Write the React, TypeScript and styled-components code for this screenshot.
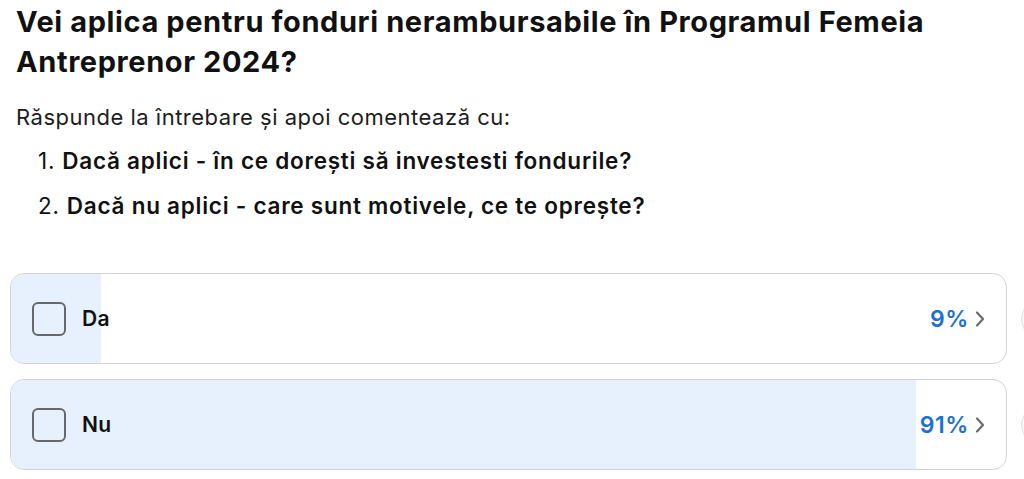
import React from "react";
import styled, { createGlobalStyle } from "styled-components";

const GlobalStyle = createGlobalStyle`
  html, body {
    margin: 0;
    padding: 0;
    background: #ffffff;
    overflow: hidden;
  }
  body {
    font-family: Inter, "Noto Sans", "Liberation Sans", sans-serif;
    color: #1c1c1e;
  }
`;

const Page = styled.div`
  width: 1024px;
  height: 479px;
  overflow: hidden;
  padding-top: 2px;
  box-sizing: border-box;
`;

const Title = styled.h1`
  margin: 0 16px;
  font-size: 29px;
  line-height: 40px;
  font-weight: 700;
  color: #111111;
  letter-spacing: 0.6px;
`;

const Intro = styled.p`
  margin: 21px 16px 0;
  font-size: 22px;
  line-height: 28px;
  letter-spacing: 0.5px;
  color: #1c1c1e;
`;

const Steps = styled.ol`
  margin: 16px 0 0;
  padding: 0 0 0 38px;
  list-style: none;
  display: flex;
  flex-direction: column;
  gap: 17px;
`;

const Step = styled.li`
  font-size: 22.5px;
  line-height: 28px;
  letter-spacing: 0.75px;
  color: #111111;
  span {
    font-weight: 400;
  }
  b {
    font-weight: 600;
  }
`;

const Poll = styled.div`
  margin-top: 53px;
  display: flex;
  flex-direction: column;
  gap: 15px;
`;

const Row = styled.div`
  display: flex;
  align-items: center;
  gap: 14px;
  padding-left: 10px;
`;

const Card = styled.div`
  position: relative;
  flex: 0 0 997px;
  height: 91px;
  box-sizing: border-box;
  border: 1.5px solid #d3d3d6;
  border-radius: 14px;
  overflow: hidden;
  display: flex;
  align-items: center;
  padding: 0 20px 0 21px;
  background: #ffffff;
`;

const Fill = styled.div`
  position: absolute;
  left: 0;
  top: 0;
  bottom: 0;
  background: #e7f1fd;
`;

const Check = styled.div`
  position: relative;
  width: 34px;
  height: 34px;
  box-sizing: border-box;
  border: 2.5px solid #67686b;
  border-radius: 6px;
  flex: none;
`;

const Label = styled.span`
  position: relative;
  margin-left: 16px;
  font-size: 21px;
  letter-spacing: 0.4px;
  font-weight: 600;
  color: #111111;
  flex: 1;
`;

const Percent = styled.span`
  position: relative;
  font-size: 23px;
  letter-spacing: 0.6px;
  font-weight: 600;
  color: #1b6fd5;
`;

const Chevron = styled.svg`
  position: relative;
  margin-left: 5px;
  width: 12px;
  height: 20px;
  flex: none;
`;

const Avatar = styled.div`
  flex: none;
  width: 38px;
  height: 38px;
  border-radius: 50%;
  border: 1.5px solid #e1e1e4;
  background: #f7f7f8;
`;

const options = [
  { label: "Da", pct: 9 },
  { label: "Nu", pct: 91 },
];

export default function App() {
  return (
    <Page>
      <GlobalStyle />
      <Title>
        Vei aplica pentru fonduri nerambursabile în Programul Femeia
        Antreprenor 2024?
      </Title>
      <Intro>Răspunde la întrebare și apoi comentează cu:</Intro>
      <Steps>
        <Step>
          <span>1. </span>
          <b>Dacă aplici - în ce dorești să investesti fondurile?</b>
        </Step>
        <Step>
          <span>2. </span>
          <b>Dacă nu aplici - care sunt motivele, ce te oprește?</b>
        </Step>
      </Steps>
      <Poll>
        {options.map((o) => (
          <Row key={o.label}>
            <Card>
              <Fill style={{ width: `${o.pct}%` }} />
              <Check />
              <Label>{o.label}</Label>
              <Percent>{o.pct}%</Percent>
              <Chevron viewBox="0 0 12 20">
                <path
                  d="M3 3.5 L9 10 L3 16.5"
                  fill="none"
                  stroke="#6a6b6e"
                  strokeWidth="2.2"
                  strokeLinecap="round"
                  strokeLinejoin="round"
                />
              </Chevron>
            </Card>
            <Avatar />
          </Row>
        ))}
      </Poll>
    </Page>
  );
}
